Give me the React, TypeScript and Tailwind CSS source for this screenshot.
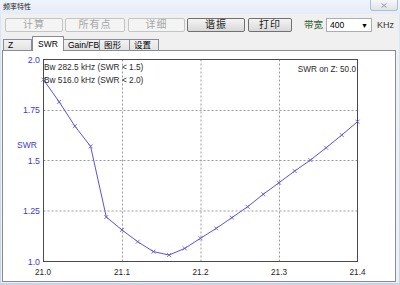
import React from 'react';

const swr = [
  1.9, 1.79, 1.67, 1.57, 1.22, 1.156, 1.098, 1.049, 1.032, 1.065, 1.115,
  1.164, 1.217, 1.271, 1.333, 1.39, 1.448, 1.502, 1.563, 1.626, 1.692,
];

const X0 = 43.5;
const X1 = 357.5;
const Y0 = 261.5; // SWR 1.0
const Y1 = 59.5; // SWR 2.0

const px = (i: number) => X0 + ((X1 - X0) * i) / (swr.length - 1);
const py = (v: number) => Y0 - ((Y0 - Y1) * (v - 1)) / 1;

function ActionButton({ label, width, disabled }: { label: string; width: string; disabled?: boolean }) {
  return (
    <div
      className={
        disabled
          ? `${width} h-[14px] flex items-center justify-center rounded-[2px] border border-[#c2c4c6] bg-[#f4f4f4] text-[10px] leading-none tracking-[1px] text-[#a6a6a6]`
          : `${width} h-[14px] flex items-center justify-center rounded-[2px] border border-[#707070] bg-gradient-to-b from-[#f4f4f4] to-[#d9d9d9] text-[10px] leading-none tracking-[1px] text-[#1a1a1a]`
      }
    >
      {label}
    </div>
  );
}

function Tab({ label, width, active }: { label: string; width: string; active?: boolean }) {
  if (active) {
    return (
      <div className={`${width} h-[15px] -mb-px relative z-10 flex items-center pl-[5px] border border-b-0 border-[#898c95] bg-white text-[8.5px] leading-none text-black`}>
        {label}
      </div>
    );
  }
  return (
    <div className={`${width} h-[11px] flex items-center pl-[4px] border border-b-0 border-l-0 first:border-l border-[#898c95] bg-gradient-to-b from-[#f2f2f2] to-[#e3e3e3] text-[8.5px] leading-none text-black`}>
      {label}
    </div>
  );
}

function SwrChart() {
  const font = 'Liberation Sans, Arial, sans-serif';
  const gridX = [122, 200.5, 279];
  const gridY = [110.5, 160.5, 211];
  const yLabels: [string, number][] = [
    ['2.0', 59.5],
    ['1.75', 110],
    ['1.5', 160.5],
    ['1.25', 211],
    ['1.0', 261.5],
  ];
  const xLabels: [string, number][] = [
    ['21.0', 43],
    ['21.1', 122],
    ['21.2', 200.5],
    ['21.3', 279],
    ['21.4', 357.5],
  ];
  const pts = swr.map((v, i) => [px(i), py(v)] as const);

  return (
    <svg width="392" height="230" viewBox="3 51 392 230" className="block">
      {gridX.map((x) => (
        <line key={x} x1={x + 0.5} y1={Y1} x2={x + 0.5} y2={Y0} stroke="#9a9a9a" strokeWidth="1" strokeDasharray="2 2" />
      ))}
      {gridY.map((y) => (
        <line key={y} x1={X0} y1={y} x2={X1} y2={y} stroke="#9a9a9a" strokeWidth="1" strokeDasharray="2 2" />
      ))}
      <rect x={X0} y={Y1} width={X1 - X0} height={Y0 - Y1} fill="none" stroke="#4a4a4a" strokeWidth="1" />

      <polyline points={pts.map(([x, y]) => `${x},${y}`).join(' ')} fill="none" stroke="#5a52e0" strokeWidth="1" />
      {pts.map(([x, y], i) => (
        <path key={i} d={`M${x - 2} ${y - 2}L${x + 2} ${y + 2}M${x - 2} ${y + 2}L${x + 2} ${y - 2}`} stroke="#5a52e0" strokeWidth="0.8" />
      ))}

      {yLabels.map(([t, y]) => (
        <text key={t} x="40" y={y + 3} textAnchor="end" fontFamily={font} fontSize="8.8" fill="#3b3bd4">
          {t}
        </text>
      ))}
      <text x="17" y="148" fontFamily={font} fontSize="8.5" fill="#3b3bd4">
        SWR
      </text>

      {xLabels.map(([t, x]) => (
        <text key={t} x={x} y="275" textAnchor="middle" fontFamily={font} fontSize="8.2" fill="#1e1e1e">
          {t}
        </text>
      ))}

      <text x="44" y="70" fontFamily={font} fontSize="8.3" fill="#2a2a2a">
        Bw 282.5 kHz (SWR &lt; 1.5)
      </text>
      <text x="44" y="82.5" fontFamily={font} fontSize="8.3" fill="#2a2a2a">
        Bw 516.0 kHz (SWR &lt; 2.0)
      </text>
      <text x="356" y="72" textAnchor="end" fontFamily={font} fontSize="8.2" fill="#2a2a2a">
        SWR on Z: 50.0
      </text>
    </svg>
  );
}

export default function App() {
  return (
    <div className="w-[400px] h-[285px] overflow-hidden flex flex-col bg-gradient-to-b from-[#dbe7f4] to-[#c5d6ea] font-[Liberation_Sans,Noto_Sans_CJK_SC,sans-serif]">
      {/* title bar */}
      <div className="h-[14px] flex items-start bg-gradient-to-b from-[#eef4fb] to-[#e4edf7]">
        <div className="pl-[3px] pt-[3px] text-[7px] leading-none text-[#222]">频率特性</div>
        <div className="ml-auto mr-[2px] w-[28px] h-[11px] flex items-center justify-center rounded-b-[3px] border border-t-0 border-[#b4bcc6] bg-gradient-to-b from-[#f5f7fa] to-[#dfe4ea]">
          <svg width="6" height="5" viewBox="0 0 6 5">
            <path d="M0.5 0.5L5.5 4.5M0.5 4.5L5.5 0.5" stroke="#8e96a0" strokeWidth="1" />
          </svg>
        </div>
      </div>

      {/* dialog body */}
      <div className="flex-1 mx-[1px] mb-[2px] flex flex-col bg-[#f0f0f0]">
        <div className="mt-[4px] h-[14px] flex items-center">
          <div className="ml-[4px]">
            <ActionButton label="计算" width="w-[58px]" disabled />
          </div>
          <div className="ml-[2px]">
            <ActionButton label="所有点" width="w-[60px]" disabled />
          </div>
          <div className="ml-[3px]">
            <ActionButton label="详细" width="w-[57px]" disabled />
          </div>
          <div className="ml-[2px]">
            <ActionButton label="谐振" width="w-[58px]" />
          </div>
          <div className="ml-[3px]">
            <ActionButton label="打印" width="w-[44px]" />
          </div>
          <div className="ml-[12px] w-[22px] text-[9.5px] leading-none text-[#2f5f2f]">带宽</div>
          <div className="w-[46px] h-[14px] flex items-center border border-[#abadb3] bg-white pl-[3px] pr-[3px]">
            <span className="text-[8.5px] leading-none text-black">400</span>
            <span className="ml-auto text-[7px] leading-none text-black">▼</span>
          </div>
          <div className="ml-[5px] text-[9px] leading-none text-[#333]">KHz</div>
        </div>

        {/* tabs */}
        <div className="mt-[4px] h-[14px] flex items-end pl-[2px]">
          <Tab label="Z" width="w-[29px]" />
          <Tab label="SWR" width="w-[32px]" active />
          <Tab label="Gain/FB" width="w-[36px]" />
          <Tab label="图形" width="w-[30px]" />
          <Tab label="设置" width="w-[29px]" />
        </div>

        <div className="flex-1 ml-[1px] mr-[3px] mb-[1px] border border-[#898c95] bg-white overflow-hidden">
          <SwrChart />
        </div>
      </div>
    </div>
  );
}
